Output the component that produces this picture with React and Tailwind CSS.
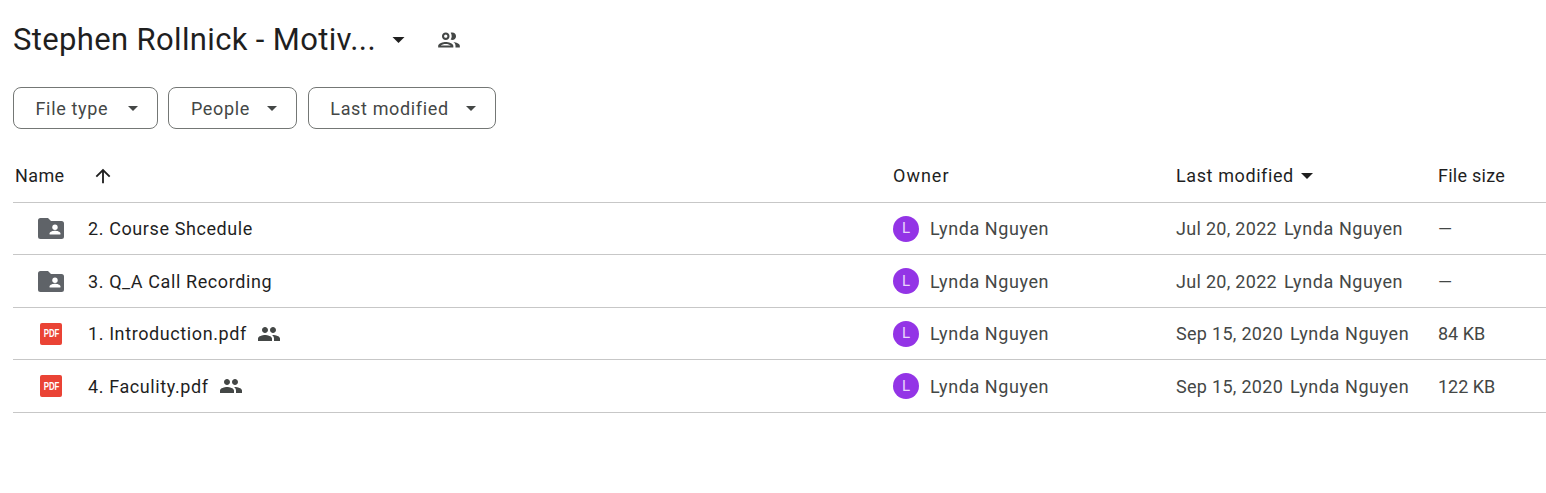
const font = '[font-family:Roboto,"Noto_Sans",sans-serif]'

function Caret({ className }) {
  return (
    <svg viewBox="0 0 10 5" className={className} fill="currentColor">
      <path d="M0 0h10L5 5z" />
    </svg>
  )
}

function SharedIcon({ className }) {
  return (
    <svg viewBox="0 0 24 24" className={className} fill="currentColor">
      <path d="M16 11c1.66 0 2.99-1.34 2.99-3S17.66 5 16 5s-3 1.34-3 3 1.34 3 3 3zm-8 0c1.66 0 2.99-1.34 2.99-3S9.66 5 8 5 5 6.34 5 8s1.34 3 3 3zm0 2c-2.33 0-7 1.17-7 3.5V19h14v-2.5c0-2.33-4.67-3.5-7-3.5zm8 0c-.29 0-.62.02-.97.05 1.16.84 1.97 1.97 1.97 3.45V19h6v-2.5c0-2.33-4.67-3.5-7-3.5z" />
    </svg>
  )
}

function SharedOutline({ className }) {
  return (
    <svg viewBox="0 0 24 24" className={className} fill="currentColor">
      <path d="M9 13.75c-2.34 0-7 1.17-7 3.5V19h14v-1.75c0-2.33-4.66-3.5-7-3.5zM4.34 17c.84-.58 2.87-1.25 4.66-1.25s3.82.67 4.66 1.25H4.34zM9 12c1.93 0 3.5-1.57 3.5-3.5S10.93 5 9 5 5.5 6.57 5.5 8.5 7.07 12 9 12zm0-5c.83 0 1.5.67 1.5 1.5S9.83 10 9 10s-1.5-.67-1.5-1.5S8.17 7 9 7zm7.04 6.81c1.16.84 1.96 1.96 1.96 3.44V19h4v-1.75c0-2.02-3.5-3.17-5.96-3.44zM15 12c1.93 0 3.5-1.57 3.5-3.5S16.93 5 15 5c-.54 0-1.04.13-1.5.35.63.89 1 1.98 1 3.15s-.37 2.26-1 3.15c.46.22.96.35 1.5.35z" />
    </svg>
  )
}

function FolderIcon() {
  return (
    <svg viewBox="0 0 26 21" className="h-[21px] w-[26px] text-[#5f6368]" fill="currentColor">
      <path d="M2.5 0h7.5l3 3h10.5A2.5 2.5 0 0 1 26 5.5v13a2.5 2.5 0 0 1-2.5 2.5h-21A2.5 2.5 0 0 1 0 18.5v-16A2.5 2.5 0 0 1 2.5 0z" />
      <circle cx="17" cy="9.2" r="2.7" fill="#fff" />
      <path d="M11.6 16.5v-1.2c0-1.7 3.5-2.6 5.4-2.6s5.4.9 5.4 2.6v1.2z" fill="#fff" />
    </svg>
  )
}

function PdfIcon() {
  return (
    <div className="flex h-[22px] w-[22px] items-center justify-center rounded-[2px] bg-[#ea4335] text-white">
      <span className="scale-x-[0.75] text-[10.5px] font-bold leading-none [font-family:'Liberation_Sans',sans-serif]">PDF</span>
    </div>
  )
}

const filters = [
  { label: 'File type', width: 'w-[145px]' },
  { label: 'People', width: 'w-[129px]' },
  { label: 'Last modified', width: 'w-[188px]' },
]

const rows = [
  { name: '2. Course Shcedule', kind: 'folder', date: 'Jul 20, 2022', size: '—' },
  { name: '3. Q_A Call Recording', kind: 'folder', date: 'Jul 20, 2022', size: '—' },
  { name: '1. Introduction.pdf', kind: 'pdf', shared: true, date: 'Sep 15, 2020', size: '84 KB' },
  { name: '4. Faculity.pdf', kind: 'pdf', shared: true, date: 'Sep 15, 2020', size: '122 KB' },
]

export default function App() {
  return (
    <div className={`h-[493px] bg-white pl-[13px] ${font}`}>
      {/* Title */}
      <div className="flex h-[87px] items-center pb-[8px] text-[#1f1f1f]">
        <h1 className="text-[31px] font-normal leading-none tracking-[0.35px]">Stephen Rollnick - Motiv...</h1>
        <Caret className="ml-[16px] h-[6px] w-[13px]" />
        <SharedOutline className="ml-[31px] h-[26px] w-[26px] text-[#444746]" />
      </div>

      {/* Filter chips */}
      <div className="flex gap-[10.4px]">
        {filters.map(f => (
          <button
            key={f.label}
            className={`flex h-[42px] items-center justify-between rounded-[8px] border border-[#747775] pl-[21.5px] pr-[19px] text-[18px] tracking-[0.65px] text-[#444746] ${f.width}`}
          >
            {f.label}
            <Caret className="h-[5px] w-[10px]" />
          </button>
        ))}
      </div>

      {/* Table */}
      <div className="mt-[21px]">
        <div className="flex h-[52.9px] items-center border-b border-[#c7c7c7] text-[18px] text-[#1f1f1f]">
          <div className="flex w-[880px] items-center pl-[2px] tracking-[0.4px]">
            Name
            <svg viewBox="0 0 24 24" className="ml-[27px] h-[22px] w-[22px]" fill="currentColor">
              <path d="M4 12l1.41 1.41L11 7.83V20h2V7.83l5.58 5.59L20 12l-8-8-8 8z" />
            </svg>
          </div>
          <div className="w-[283px] tracking-[1px]">Owner</div>
          <div className="flex w-[262px] items-center tracking-[0.6px]">
            Last modified
            <Caret className="ml-[7px] h-[6px] w-[12px]" />
          </div>
          <div className="tracking-[0.25px]">File size</div>
        </div>

        {rows.map(row => (
          <div key={row.name} className="flex h-[52.5px] items-center border-b border-[#c7c7c7] text-[18px] text-[#1f1f1f]">
            <div className="flex w-[880px] items-center">
              <div className="flex w-[75px] justify-center pr-[1px] pl-[2px]">
                {row.kind === 'folder' ? <FolderIcon /> : <PdfIcon />}
              </div>
              <span className="tracking-[0.6px]">{row.name}</span>
              {row.shared && <SharedIcon className="ml-[10px] h-[24px] w-[24px] text-[#444746]" />}
            </div>
            <div className="flex w-[283px] items-center gap-[11px] text-[#444746]">
              <div className="flex h-[26px] w-[26px] items-center justify-center rounded-full bg-[#9334e6] text-[15px] text-[#e9d5fb]">L</div>
              <span className="tracking-[0.58px]">Lynda Nguyen</span>
            </div>
            <div className="flex w-[262px] items-center gap-[7px] text-[#444746]">
              <span className="tracking-[0.3px]">{row.date}</span>
              <span className="tracking-[0.58px]">Lynda Nguyen</span>
            </div>
            <div className="text-[#444746]">{row.size}</div>
          </div>
        ))}
      </div>
    </div>
  )
}
